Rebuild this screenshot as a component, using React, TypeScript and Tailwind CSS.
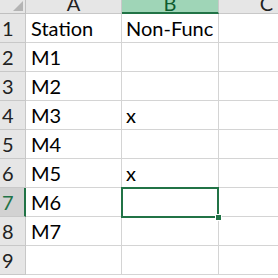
import React from "react";

const rows: [string, string][] = [
  ["Station", "Non-Func"],
  ["M1", ""],
  ["M2", ""],
  ["M3", "x"],
  ["M4", ""],
  ["M5", "x"],
  ["M6", ""],
  ["M7", ""],
  ["", ""],
];

export default function App() {
  return (
    <div
      className="relative w-[278px] h-[278px] overflow-hidden bg-white text-black"
      style={{ fontFamily: "Lato, 'Open Sans', sans-serif" }}
    >
      <div className="grid grid-cols-[26px_96px_97px_96px] grid-rows-[14px_repeat(9,29px)]">
        {/* corner */}
        <div className="relative bg-[#e6e6e6] border-r border-b border-[#bfbfbf] overflow-hidden">
          <div className="absolute right-[2px] bottom-[2px] w-0 h-0 border-l-[10px] border-l-transparent border-b-[10px] border-b-[#b4b4b4]" />
        </div>
        <div className="bg-[#e6e6e6] border-r border-b border-[#c8c8c8] overflow-hidden flex justify-center">
          <span className="text-[20px] leading-[20px] mt-[-7px] text-[#222]">A</span>
        </div>
        <div className="bg-[#9fd5b7] border-r border-b-2 border-r-[#c8c8c8] border-b-[#217346] overflow-hidden flex justify-center">
          <span className="text-[20px] leading-[20px] mt-[-7px] text-[#0e5c2f]">B</span>
        </div>
        <div className="bg-[#e6e6e6] border-r border-b border-[#c8c8c8] overflow-hidden flex justify-center">
          <span className="text-[20px] leading-[20px] mt-[-7px] text-[#222]">C</span>
        </div>
        {rows.map(([a, b], i) => {
          const sel = i === 6;
          return (
            <React.Fragment key={i}>
              <div
                className={
                  sel
                    ? "bg-[#d2d2d2] border-r-2 border-r-[#217346] border-b border-b-[#c8c8c8] pl-[2px] text-[20px] leading-[29px] text-[#217346] overflow-hidden"
                    : "bg-[#e6e6e6] border-r border-b border-[#c8c8c8] pl-[2px] text-[20px] leading-[29px] text-[#222] overflow-hidden"
                }
              >
                {i + 1}
              </div>
              <div className="border-r border-b border-[#d4d4d4] pl-[5px] text-[20px] leading-[29px] whitespace-nowrap">
                {a}
              </div>
              <div className="border-r border-b border-[#d4d4d4] pl-[4px] text-[20px] leading-[29px] whitespace-nowrap">
                {b}
              </div>
              <div className="border-r border-b border-[#d4d4d4]" />
            </React.Fragment>
          );
        })}
      </div>
      {/* selection */}
      <div className="absolute left-[121px] top-[187px] w-[98px] h-[31px] border-2 border-[#217346]" />
      <div className="absolute left-[215px] top-[214px] w-[7px] h-[7px] bg-[#217346] border border-white" />
    </div>
  );
}
